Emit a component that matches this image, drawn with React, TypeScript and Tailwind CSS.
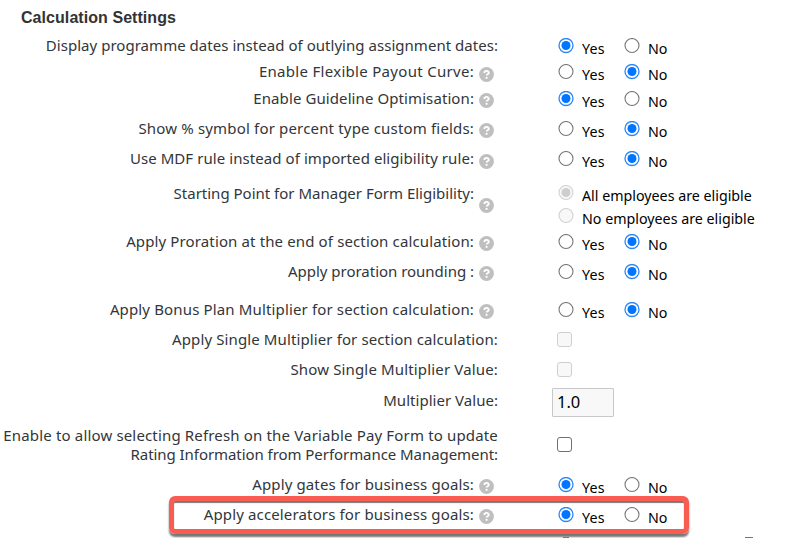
type Choice = 'yes' | 'no';

type RowProps = {
  label: string;
  gap: string;
  tracking: string;
  help?: string;
  value?: Choice;
  check?: 'disabled' | 'enabled';
};

function Help({ shift }: { shift: string }) {
  return (
    <svg viewBox="0 0 15 15" className={`relative ml-[5px] mr-1 h-[15px] w-[15px] shrink-0 ${shift}`}>
      <circle cx="7.5" cy="7.5" r="7.4" fill="#bfbfbf" />
      <path d="M5.4 6c0-2.8 4.4-2.7 4.4-.2 0 1.5-2.2 1.4-2.2 2.8" fill="none" stroke="#fff" strokeWidth="1.9" />
      <circle cx="7.6" cy="10.8" r="1.1" fill="#fff" />
    </svg>
  );
}

function Radio({ checked = false, disabled = false }: { checked?: boolean; disabled?: boolean }) {
  const ring = disabled ? '#d2d2d2' : checked ? '#2b86f7' : '#777777';
  return (
    <svg viewBox="0 0 16 16" className="h-4 w-4 shrink-0">
      <circle cx="8" cy="7.5" r="7" fill={disabled ? '#f8f8f8' : '#fff'} stroke={ring} strokeWidth={checked && !disabled ? 1.3 : 1.1} />
      {checked && <circle cx="8" cy="7.5" r="4.5" fill={disabled ? '#cecece' : '#0075ff'} />}
    </svg>
  );
}

function Check({ disabled }: { disabled: boolean }) {
  return (
    <span
      className={`mb-[2px] ml-[5px] h-[15px] w-[15px] rounded-[3px] border ${disabled ? 'border-[#cfcfcf] bg-[#f8f8f8]' : 'border-[#707070] bg-white'}`}
    />
  );
}

function YesNo({ value }: { value: Choice }) {
  return (
    <div className="flex items-center pl-1.5 text-[14.25px] text-black">
      <Radio checked={value === 'yes'} />
      <span className="ml-2 w-[41.5px] pt-[6px] leading-5 tracking-[0.2px]">Yes</span>
      <Radio checked={value === 'no'} />
      <span className="ml-[8.5px] pt-[6px] leading-5">No</span>
    </div>
  );
}

function Row({ label, gap, tracking, help, value, check }: RowProps) {
  return (
    <div className={`flex h-5 items-center ${gap}`}>
      <div className="flex w-[498px] shrink-0 items-center justify-end whitespace-nowrap">
        <span className={`pb-[2px] ${tracking}`}>{label}</span>
        {help && <Help shift={help} />}
      </div>
      <div className="ml-[54px] flex h-5 items-center">
        {value && <YesNo value={value} />}
        {check && <Check disabled={check === 'disabled'} />}
      </div>
    </div>
  );
}

function Eligibility({ label, checked, gap }: { label: string; checked?: boolean; gap: string }) {
  return (
    <div className={`flex h-5 items-center pl-1.5 text-[14.25px] text-black ${gap}`}>
      <Radio checked={checked} disabled />
      <span className="ml-2 whitespace-nowrap pt-[6px] leading-5">{label}</span>
    </div>
  );
}

export default function App() {
  return (
    <main className="relative h-[538px] w-[785px] overflow-hidden bg-white font-['Noto_Sans',sans-serif] text-[15px] leading-5 text-[#32363a]">
      <h2 className="h-9 pl-[21px] pt-2 font-['Liberation_Sans',sans-serif] text-[16px] font-bold leading-5 tracking-[0.06px] text-[#333]">
        Calculation Settings
      </h2>
      <Row label="Display programme dates instead of outlying assignment dates:" gap="mt-0" tracking="tracking-[0.033px]" value="yes" />
      <Row label="Enable Flexible Payout Curve:" gap="mt-1.5" tracking="tracking-[0.3px]" help="top-[2px]" value="no" />
      <Row label="Enable Guideline Optimisation:" gap="mt-[7px]" tracking="tracking-[0.09px]" help="top-px" value="yes" />
      <Row label="Show % symbol for percent type custom fields:" gap="mt-2.5" tracking="tracking-[0.17px]" help="top-px" value="no" />
      <Row label="Use MDF rule instead of imported eligibility rule:" gap="mt-2.5" tracking="tracking-[0.07px]" help="top-[2px]" value="no" />
      <div className="mt-3.5 flex h-[43px]">
        <div className="flex h-5 w-[498px] shrink-0 items-center justify-end whitespace-nowrap">
          <span className="tracking-normal">Starting Point for Manager Form Eligibility:</span>
          <Help shift="top-[12px]" />
        </div>
        <div className="ml-[54px]">
          <Eligibility label="All employees are eligible" checked gap="mt-0" />
          <Eligibility label="No employees are eligible" gap="mt-[3px]" />
        </div>
      </div>
      <Row label="Apply Proration at the end of section calculation:" gap="mt-1.5" tracking="tracking-[0.13px]" help="top-px" value="no" />
      <Row label="Apply proration rounding :" gap="mt-2.5" tracking="tracking-[-0.02px]" help="top-px" value="no" />
      <Row label="Apply Bonus Plan Multiplier for section calculation:" gap="mt-[18px]" tracking="tracking-[0.145px]" help="top-px" value="no" />
      <Row label="Apply Single Multiplier for section calculation:" gap="mt-2.5" tracking="tracking-[0.115px]" check="disabled" />
      <Row label="Show Single Multiplier Value:" gap="mt-2.5" tracking="tracking-[0.155px]" check="disabled" />
      <div className="mt-2 flex h-[29px]">
        <div className="w-[498px] shrink-0 pt-[2px] text-right">
          <span className="tracking-[0.03px]">Multiplier Value:</span>
        </div>
        <input
          readOnly
          value="1.0"
          className="ml-[54px] h-[29px] w-[62px] rounded-[1px] border border-[#c8c8c8] bg-[#f8f8f8] px-1 pb-[2px] text-[16.5px] text-black outline-none"
        />
      </div>
      <div className="mt-[9px] flex h-[38px] items-center leading-[19px]">
        <div className="flex w-[498px] shrink-0 flex-col items-end whitespace-nowrap">
          <span className="tracking-[0.16px]">Enable to allow selecting Refresh on the Variable Pay Form to update</span>
          <span className="tracking-[-0.06px]">Rating Information from Performance Management:</span>
        </div>
        <div className="ml-[54px] flex">
          <Check disabled={false} />
        </div>
      </div>
      <Row label="Apply gates for business goals:" gap="mt-[11px]" tracking="tracking-[0.13px]" help="top-px" value="yes" />
      <Row label="Apply accelerators for business goals:" gap="mt-2.5" tracking="tracking-[0.145px]" help="top-px" value="yes" />

      {/* Highlight drawn over the accelerators row */}
      <div className="absolute left-[169px] top-[496px] h-[38px] w-[520px] rounded-[6px] border-[5px] border-[#f95c50] shadow-[0_3px_2px_#777,inset_0_2px_1px_#777]" />
      <div className="absolute left-[563px] top-[537px] h-4 w-1.5 bg-[#777]" />
      <div className="absolute left-[745px] top-[537px] h-1 w-2 bg-[#3b86ad]" />
    </main>
  );
}
